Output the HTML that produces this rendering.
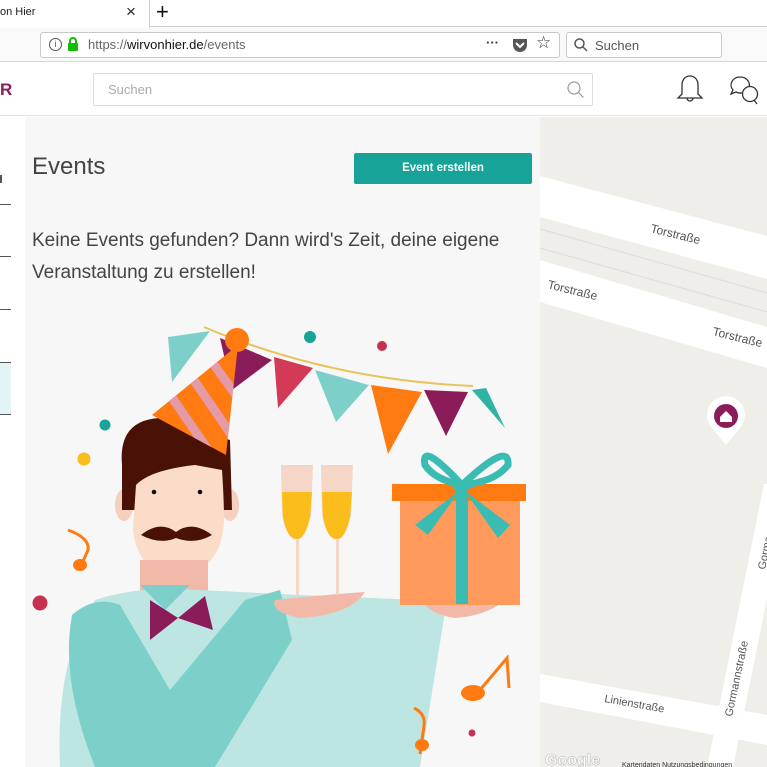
<!DOCTYPE html>
<html><head><meta charset="utf-8">
<style>
*{margin:0;padding:0;box-sizing:border-box}
body{width:767px;height:767px;overflow:hidden;background:#fff;font-family:"Liberation Sans",sans-serif;position:relative}
.abs{position:absolute}
</style></head><body>
<div class="abs" style="left:0;top:0;width:767px;height:27px;background:#fff;border-bottom:1px solid #cfcfcf"></div>
<div class="abs" style="left:0;top:0;width:150px;height:28px;background:#fff;border-right:1px solid #cfcfcf"></div>
<div class="abs" style="left:0;top:6px;font-size:11px;color:#222">on Hier</div>
<div class="abs" style="left:126px;top:2px;font-size:17px;color:#222">×</div>
<div class="abs" style="left:156px;top:-1px;font-size:22px;color:#111">+</div>
<div class="abs" style="left:0;top:28px;width:767px;height:34px;background:#f9f9fa;border-bottom:1px solid #d5d5d5"></div>
<div class="abs" style="left:40px;top:32px;width:520px;height:26px;background:#fff;border:1px solid #c8c8c8;border-radius:3px"></div>
<div class="abs" style="left:49px;top:38px;width:13px;height:13px;border:1px solid #555;border-radius:50%;font-size:9px;text-align:center;line-height:11px;color:#555">i</div>
<div class="abs" style="left:68px;top:43px;width:10px;height:8px;background:#12bc00;border-radius:1px"></div>
<div class="abs" style="left:69px;top:37px;width:8px;height:9px;border:2px solid #12bc00;border-bottom:none;border-radius:4px 4px 0 0"></div>
<div class="abs" style="left:88px;top:37px;font-size:13px;color:#666">https://<span style="color:#111">wirvonhier.de</span>/events</div>
<div class="abs" style="left:486px;top:35px;font-size:13px;color:#333;font-weight:bold">···</div>
<svg class="abs" style="left:512px;top:37px" width="16" height="16"><path d="M1 2h14v6a7 7 0 0 1-14 0z" fill="#555"/><path d="M4 6l4 4 4-4" stroke="#fff" stroke-width="2" fill="none"/></svg>
<div class="abs" style="left:536px;top:33px;font-size:17px;color:#333">☆</div>
<div class="abs" style="left:566px;top:32px;width:156px;height:26px;background:#fff;border:1px solid #c8c8c8;border-radius:3px"></div>
<svg class="abs" style="left:574px;top:38px" width="14" height="14"><circle cx="5.5" cy="5.5" r="4.5" stroke="#555" stroke-width="1.5" fill="none"/><path d="M9 9l4 4" stroke="#555" stroke-width="1.5"/></svg>
<div class="abs" style="left:595px;top:38px;font-size:13px;color:#555">Suchen</div>
<div class="abs" style="left:0;top:63px;width:767px;height:53px;background:#fff;border-bottom:1px solid #e3e3e3"></div>
<div class="abs" style="left:0;top:80px;font-size:17px;font-weight:bold;color:#8b1c5a">R</div>
<div class="abs" style="left:93px;top:73px;width:500px;height:33px;border:1px solid #ddd;border-radius:2px"></div>
<div class="abs" style="left:108px;top:82px;font-size:13px;color:#aaa">Suchen</div>
<svg class="abs" style="left:567px;top:81px" width="18" height="18"><circle cx="7" cy="7" r="6" stroke="#999" stroke-width="1.2" fill="none"/><path d="M11.5 11.5l5 5" stroke="#999" stroke-width="1.2"/></svg>
<svg class="abs" style="left:674px;top:73px" width="32" height="32"><path d="M16 3c-5 0-8 4-8 9v9l-4 4h24l-4-4v-9c0-5-3-9-8-9z" stroke="#333" stroke-width="1.3" fill="none"/><path d="M13 25a3 3 0 0 0 6 0" stroke="#333" stroke-width="1.3" fill="none"/></svg>
<svg class="abs" style="left:728px;top:74px" width="34" height="32"><path d="M12 3a9 8 0 0 0-7 13l-2 4 5-2a9 8 0 1 0 4-15z" stroke="#333" stroke-width="1.3" fill="none"/><circle cx="22" cy="20" r="7.5" stroke="#333" stroke-width="1.3" fill="#fff"/><path d="M26 26l3 4" stroke="#333" stroke-width="1.3"/></svg>
<div class="abs" style="left:0;top:117px;width:25px;height:650px;background:#fff"></div>
<div class="abs" style="left:0;top:204px;width:11px;height:1px;background:#555"></div>
<div class="abs" style="left:0;top:256px;width:11px;height:1px;background:#555"></div>
<div class="abs" style="left:0;top:309px;width:11px;height:1px;background:#555"></div>
<div class="abs" style="left:0;top:362px;width:11px;height:53px;background:#e2f4f3;border-top:1px solid #555;border-bottom:1px solid #555"></div>
<div class="abs" style="left:0;top:175px;width:2px;height:8px;background:#555"></div>
<div class="abs" style="left:25px;top:117px;width:515px;height:650px;background:#f7f7f7"></div>
<div class="abs" style="left:32px;top:153px;font-size:24px;color:#444">Events</div>
<div class="abs" style="left:354px;top:153px;width:178px;height:31px;background:#17a398;border-radius:2px;color:#fff;font-size:11.5px;font-weight:bold;text-align:center;line-height:31px">Event erstellen</div>
<div class="abs" style="left:32px;top:225px;font-size:19px;line-height:32px;color:#444;width:505px">Keine Events gefunden? Dann wird's Zeit, deine eigene Veranstaltung zu erstellen!</div>
<svg class="abs" style="left:0;top:0" width="540" height="767">
<defs><clipPath id="hat"><polygon points="238,345 152,415 226,455"/></clipPath></defs>
<path d="M204 327 Q330 380 473 386" stroke="#e8c25a" stroke-width="2" fill="none"/>
<polygon points="168,337 210,331 172,382" fill="#7dd0c9"/>
<polygon points="220,338 272,360 232,390" fill="#8b1c5a"/>
<polygon points="274,357 313,368 278,408" fill="#d23a55"/>
<polygon points="315,370 369,385 336,422" fill="#7dd0c9"/>
<polygon points="371,385 422,392 388,454" fill="#ff7a10"/>
<polygon points="424,390 468,392 446,436" fill="#8b1c5a"/>
<polygon points="472,390 486,388 505,428" fill="#2fb3a4"/>
<ellipse cx="124" cy="505" rx="9" ry="16" fill="#f6d0bf"/>
<ellipse cx="230" cy="505" rx="9" ry="16" fill="#f6d0bf"/>
<path d="M122 465 Q118 420 160 418 L230 440 L232 510 L122 510z" fill="#4a1206"/>
<path d="M136 485 Q150 470 195 465 L222 470 Q224 500 224 520 Q222 570 180 575 Q138 575 133 530z" fill="#fbdcc8"/>
<rect x="140" y="560" width="68" height="45" fill="#f2b8a8"/>
<circle cx="154" cy="492" r="2.3" fill="#111"/><circle cx="200" cy="492" r="2.3" fill="#111"/>
<path d="M141 535 Q160 520 176 532 Q192 520 212 535 Q195 545 176 538 Q160 545 141 535z" fill="#4a1206"/>
<g clip-path="url(#hat)">
<rect x="140" y="330" width="110" height="130" fill="#ff7a10"/>
<g stroke="#e59aa8" stroke-width="9">
<path d="M160 380 L215 460"/><path d="M180 360 L235 440"/><path d="M200 345 L250 415"/>
</g></g>
<circle cx="237" cy="340" r="12" fill="#ff7a10"/>
<path d="M95 600 Q140 585 200 590 L300 595 L420 600 L440 620 L400 767 L60 767 Q55 660 95 600z" fill="#bde6e3"/>
<path d="M330 767 L425 598 L445 612 L420 767z" fill="#bde6e3"/>
<path d="M72 615 Q95 595 120 605 L170 690 L245 600 L280 590 L292 640 L215 767 L95 767 Q60 680 72 615z" fill="#7dd0c9"/>
<path d="M140 585 L165 610 L190 585" fill="#7dd0c9"/>
<polygon points="150,600 178,618 150,640" fill="#8b1c5a"/><polygon points="205,596 178,618 213,630" fill="#8b1c5a"/>
<path d="M275 600 Q320 595 365 592 Q350 615 300 618 Q270 612 275 600z" fill="#f2b8a8"/>
<path d="M425 595 Q470 590 512 592 Q495 615 455 618 Q420 612 425 595z" fill="#f2b8a8"/>
<path d="M281 465 h32 l-2 50 q-6 25 -14 25 q-10 0 -15 -25z" fill="#f6d6c6"/>
<path d="M282 492 h30 l-2 25 q-5 22 -13 22 q-10 0 -14 -22z" fill="#fbbd1b"/>
<path d="M321 465 h32 l-2 50 q-6 25 -14 25 q-10 0 -15 -25z" fill="#f6d6c6"/>
<path d="M322 492 h30 l-2 25 q-5 22 -13 22 q-10 0 -14 -22z" fill="#fbbd1b"/>
<rect x="296" y="540" width="3" height="55" fill="#f6d6c6"/><rect x="336" y="540" width="3" height="55" fill="#f6d6c6"/>
<rect x="400" y="500" width="120" height="105" fill="#ff9a5c"/>
<rect x="392" y="484" width="134" height="17" fill="#ff7a10"/>
<rect x="456" y="484" width="12" height="120" fill="#3bbcb2"/>
<path d="M462 485 Q420 440 425 465 Q435 480 462 485z M462 485 Q510 440 508 465 Q495 482 462 485z" fill="none" stroke="#3bbcb2" stroke-width="7"/>
<path d="M460 490 L415 525 L428 535z M464 490 L510 525 L498 538z" fill="#3bbcb2"/>
<circle cx="310" cy="337" r="6" fill="#17a398"/><circle cx="382" cy="346" r="5" fill="#c8304f"/>
<circle cx="105" cy="425" r="5.5" fill="#17a398"/><circle cx="84" cy="459" r="6.5" fill="#fbbd1b"/>
<circle cx="40" cy="603" r="7.5" fill="#c8304f"/><circle cx="472" cy="733" r="3.5" fill="#c8304f"/>
<g fill="none" stroke="#ff7a10" stroke-width="3"><path d="M68 530 q22 8 20 20 l-8 18"/><path d="M414 708 q12 6 10 18 l-4 28"/><path d="M480 690 l27 -32 l2 30"/></g>
<ellipse cx="80" cy="565" rx="7" ry="6" fill="#ff7a10"/><ellipse cx="422" cy="745" rx="7" ry="6" fill="#ff7a10"/><ellipse cx="473" cy="693" rx="12" ry="8" fill="#ff7a10"/>
</svg>
<svg class="abs" style="left:540px;top:117px" width="227" height="650" viewBox="540 117 227 650">
<rect x="540" y="117" width="227" height="650" fill="#efeee9"/>
<polygon points="540,176 767,236 767,279 540,217" fill="#fff"/>
<path d="M540 229 L767 293 M540 248 L767 312" stroke="#dcdcd8" stroke-width="1"/>
<polygon points="540,260 767,327 767,368 540,302" fill="#fff"/>
<polygon points="540,674 767,715 767,745 540,702" fill="#fff"/>
<polygon points="707,767 733,767 790,484 764,484" fill="#fff"/>
<g font-family="Liberation Sans,sans-serif" font-size="12" fill="#555">
<text x="650" y="232" transform="rotate(14 650 232)">Torstraße</text>
<text x="547" y="288" transform="rotate(14 547 288)">Torstraße</text>
<text x="712" y="335" transform="rotate(14 712 335)">Torstraße</text>
<text x="604" y="702" font-size="11" transform="rotate(10 604 702)">Linienstraße</text>
<text x="732" y="717" font-size="11" transform="rotate(-78 732 717)">Gormannstraße</text>
<text x="765" y="570" font-size="11" transform="rotate(-78 765 570)">Gorma</text>
</g>
<path d="M726 445 L712 428 A19 19 0 1 1 740 428z" fill="#fff"/>
<circle cx="726" cy="416" r="15" fill="#fff"/>
<circle cx="726" cy="416" r="12" fill="#8b1c5a"/>
<path d="M720 417 L726 411 L732 417 V422 H720z" fill="#fff"/>
<text x="545" y="765" font-family="Liberation Sans,sans-serif" font-size="16" fill="#fff" stroke="#bbb" stroke-width="0.6" font-weight="bold">Google</text>
<text x="622" y="767" font-size="7" font-family="Liberation Sans,sans-serif" fill="#333">Kartendaten   Nutzungsbedingungen</text>
</svg>
</body></html>
